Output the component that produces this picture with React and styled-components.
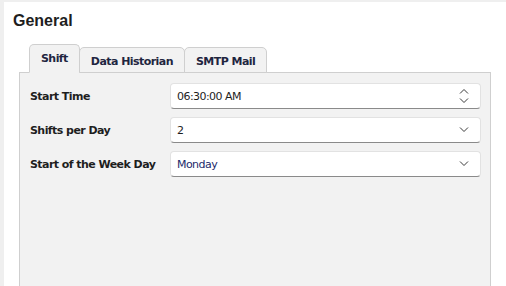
import React from 'react';
import styled, { createGlobalStyle } from 'styled-components';

const EDGE = '#efefef';
const PANEL = '#f2f2f2';
const LINE = '#cfcfcf';
const TEXT = '#1e1e1e';

const Global = createGlobalStyle`
  html, body {
    margin: 0;
    background: #ffffff;
  }
  body {
    font-family: "DejaVu Sans", Verdana, sans-serif;
    letter-spacing: -0.55px;
  }
`;

const Page = styled.div`
  height: 286px;
  box-sizing: border-box;
  border-top: 2px solid ${EDGE};
  border-left: 4px solid ${EDGE};
  padding: 0 15px 0 9px;
  overflow: hidden;
`;

const Title = styled.h1`
  margin: 0;
  padding-top: 10px;
  font-family: "Liberation Sans", Arial, sans-serif;
  font-size: 16px;
  line-height: 18px;
  font-weight: bold;
  letter-spacing: 0;
  color: ${TEXT};
`;

const Tabs = styled.div`
  display: flex;
  align-items: flex-end;
  margin: 14px 0 0 16px;
  position: relative;
  z-index: 1;
`;

const Tab = styled.div`
  box-sizing: border-box;
  height: ${p => (p.$active ? 29 : 26)}px;
  padding: ${p => (p.$active ? 0 : 2)}px 11px 0;
  margin-bottom: -1px;
  margin-left: ${p => (p.$active ? 0 : -1)}px;
  display: flex;
  align-items: center;
  justify-content: center;
  background: ${PANEL};
  border: 1px solid ${LINE};
  border-bottom-color: ${p => (p.$active ? PANEL : LINE)};
  border-radius: 5px 5px 0 0;
  font-size: 11px;
  font-weight: bold;
  color: #1f2540;
`;

const Panel = styled.div`
  margin-left: 6px;
  height: 240px;
  background: ${PANEL};
  border: 1px solid ${LINE};
  padding: 10px 9px 0 10px;
  display: flex;
  flex-direction: column;
  gap: 8px;
`;

const Row = styled.div`
  display: flex;
  align-items: center;
  height: 26px;
`;

const Label = styled.div`
  width: 140px;
  flex: none;
  font-size: 11px;
  font-weight: bold;
  color: ${TEXT};
`;

const Field = styled.div`
  flex: 1;
  box-sizing: border-box;
  height: 26px;
  display: flex;
  align-items: center;
  justify-content: space-between;
  padding: 0 11px 0 6px;
  background: #ffffff;
  border: 1px solid #e2e2e2;
  border-bottom-color: #8a8a8a;
  border-radius: 4px;
  font-size: 11px;
  color: ${p => p.$color || TEXT};
`;

const Chevron = ({ up }) => (
  <svg width="10" height="6" viewBox="0 0 10 6" fill="none">
    <path
      d={up ? 'M1 5.5 L5 1.5 L9 5.5' : 'M1 0.5 L5 4.5 L9 0.5'}
      stroke="#3a3a3a"
      strokeWidth="1"
    />
  </svg>
);

const Spin = styled.div`
  display: flex;
  flex-direction: column;
  gap: 4px;
`;

export default function App() {
  return (
    <>
      <Global />
      <Page>
        <Title>General</Title>
        <Tabs>
          <Tab $active>Shift</Tab>
          <Tab>Data Historian</Tab>
          <Tab>SMTP Mail</Tab>
        </Tabs>
        <Panel>
          <Row>
            <Label>Start Time</Label>
            <Field>
              06:30:00 AM
              <Spin>
                <Chevron up />
                <Chevron />
              </Spin>
            </Field>
          </Row>
          <Row>
            <Label>Shifts per Day</Label>
            <Field>
              2
              <Chevron />
            </Field>
          </Row>
          <Row>
            <Label>Start of the Week Day</Label>
            <Field $color="#1b2a6b">
              Monday
              <Chevron />
            </Field>
          </Row>
        </Panel>
      </Page>
    </>
  );
}
